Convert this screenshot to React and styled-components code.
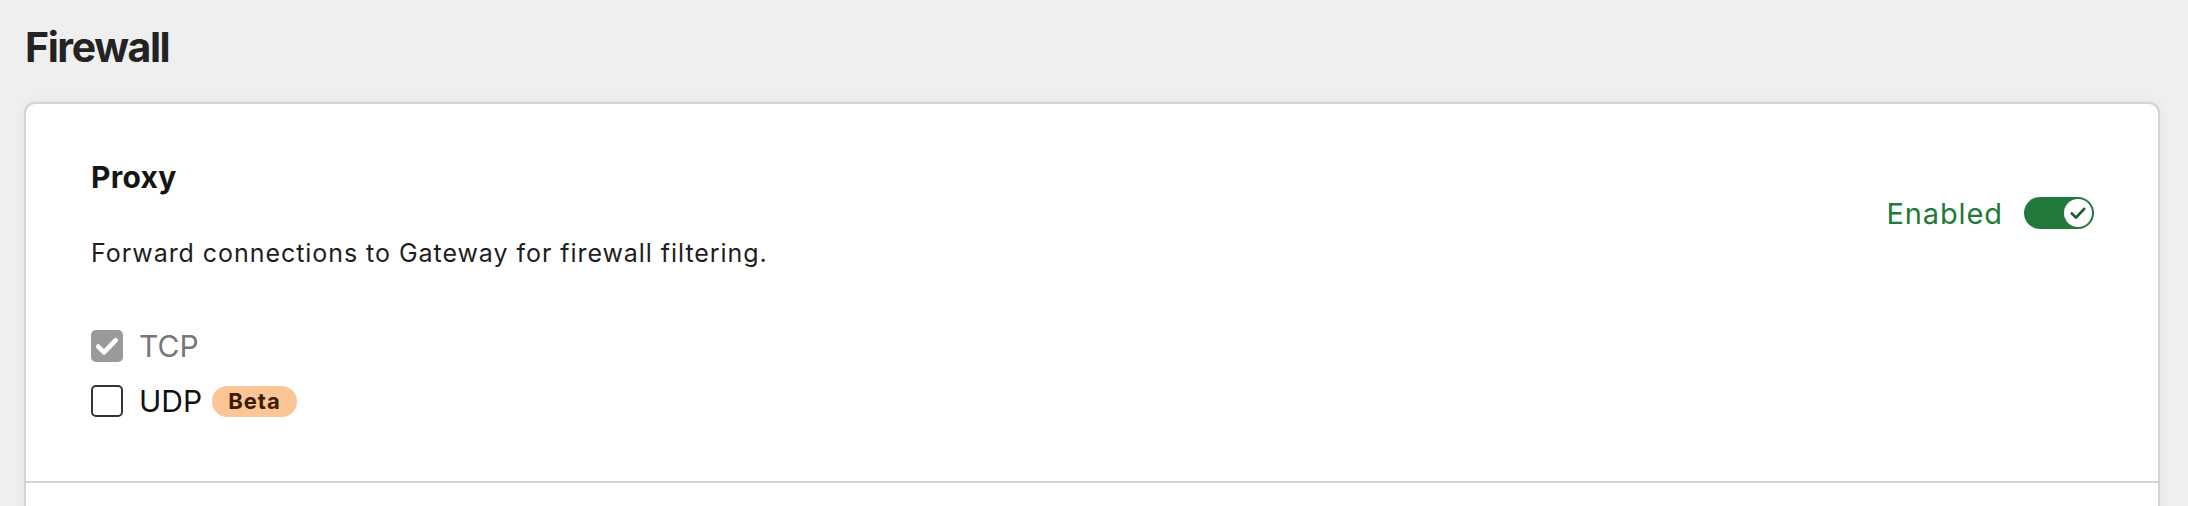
import React, { useState } from 'react';
import styled, { createGlobalStyle } from 'styled-components';

const GlobalStyle = createGlobalStyle`
  html, body {
    margin: 0;
    padding: 0;
    overflow: hidden;
    background: #efefef;
  }
  body {
    font-family: Inter, "Noto Sans", "DejaVu Sans", sans-serif;
    color: #1a1a1a;
  }
`;

const StyledPage = styled.div`
  padding: 21px 28px 0 24px;
  height: 100vh;
  box-sizing: border-box;
`;

const StyledPageTitle = styled.h1`
  margin: 0 0 28px 1px;
  font-size: 41px;
  line-height: 53px;
  font-weight: 700;
  letter-spacing: -1.4px;
  color: #232323;
`;

const StyledCard = styled.div`
  background: #fff;
  border: 2px solid #d3d3d3;
  border-radius: 11px;
  box-shadow: 0 0 10px rgba(0, 0, 0, 0.05);
`;

const StyledSection = styled.section`
  padding: ${({ $last }) => ($last ? '40px 64px' : '55px 64px 62px 65px')};
  border-top: ${({ $first }) => ($first ? 'none' : '2px solid #d3d3d3')};
  min-height: ${({ $last }) => ($last ? '200px' : '0')};
`;

const StyledHeader = styled.div`
  display: flex;
  align-items: center;
  justify-content: space-between;
`;

const StyledHeading = styled.h2`
  margin: 0 0 45px;
  font-size: 30px;
  line-height: 36px;
  font-weight: 700;
  letter-spacing: 0.3px;
  color: #151515;
`;

const StyledDescription = styled.p`
  margin: 0;
  font-size: 25px;
  line-height: 27px;
  letter-spacing: 0.95px;
  color: #1e1e1e;
`;

const StyledStatus = styled.div`
  display: flex;
  align-items: center;
  gap: 21px;
  color: #1f7a38;
  font-size: 29px;
  letter-spacing: 0.9px;
`;

const StyledSwitch = styled.button`
  position: relative;
  width: 70px;
  height: 32px;
  padding: 0;
  border: none;
  border-radius: 16px;
  background: ${({ $on }) => ($on ? '#217a3b' : '#9a9a9a')};
  cursor: pointer;
`;

const StyledKnob = styled.span`
  position: absolute;
  top: 2px;
  left: ${({ $on }) => ($on ? '40px' : '2px')};
  width: 28px;
  height: 28px;
  border-radius: 50%;
  background: #fff;
  display: flex;
  align-items: center;
  justify-content: center;
`;

const StyledOptions = styled.div`
  display: flex;
  flex-direction: column;
  gap: 19px;
  margin-top: 61px;
`;

const StyledOption = styled.label`
  display: flex;
  align-items: center;
  gap: 16px;
  font-size: 30px;
  line-height: 36px;
  color: ${({ $disabled }) => ($disabled ? '#777' : '#111')};
`;

const StyledBox = styled.span`
  width: 32px;
  height: 32px;
  box-sizing: border-box;
  border-radius: 5px;
  display: flex;
  align-items: center;
  justify-content: center;
  background: ${({ $checked, $disabled }) =>
    $checked ? ($disabled ? '#9a9a9a' : '#217a3b') : '#fff'};
  border: ${({ $checked }) => ($checked ? 'none' : '2px solid #333')};
`;

const StyledLabelText = styled.span`
  display: flex;
  align-items: center;
  gap: 10px;
`;

const StyledBadge = styled.span`
  display: inline-flex;
  align-items: center;
  height: 31px;
  padding: 0 16px;
  border-radius: 16px;
  background: #fbc596;
  color: #3a1c07;
  font-size: 22px;
  font-weight: 700;
  letter-spacing: 1px;
`;

const Check = ({ color, size, width }) => (
  <svg width={size} height={size} viewBox="0 0 24 24" fill="none">
    <path
      d="M4.5 12.5l5 5L19.5 7"
      stroke={color}
      strokeWidth={width}
      strokeLinecap="round"
      strokeLinejoin="round"
    />
  </svg>
);

const Option = ({ label, checked, disabled, badge, onToggle }) => (
  <StyledOption $disabled={disabled} onClick={disabled ? undefined : onToggle}>
    <StyledBox $checked={checked} $disabled={disabled}>
      {checked && <Check color="#fff" size={28} width={4} />}
    </StyledBox>
    <StyledLabelText>
      {label}
      {badge && <StyledBadge>{badge}</StyledBadge>}
    </StyledLabelText>
  </StyledOption>
);

const App = () => {
  const [enabled, setEnabled] = useState(true);
  const [udp, setUdp] = useState(false);

  return (
    <>
      <GlobalStyle />
      <StyledPage>
        <StyledPageTitle>Firewall</StyledPageTitle>
        <StyledCard>
          <StyledSection $first>
            <StyledHeader>
              <div>
                <StyledHeading>Proxy</StyledHeading>
                <StyledDescription>
                  Forward connections to Gateway for firewall filtering.
                </StyledDescription>
              </div>
              <StyledStatus>
                {enabled ? 'Enabled' : 'Disabled'}
                <StyledSwitch $on={enabled} onClick={() => setEnabled(!enabled)}>
                  <StyledKnob $on={enabled}>
                    {enabled && <Check color="#1a5a2b" size={20} width={3.2} />}
                  </StyledKnob>
                </StyledSwitch>
              </StyledStatus>
            </StyledHeader>
            <StyledOptions>
              <Option label="TCP" checked disabled />
              <Option label="UDP" badge="Beta" checked={udp} onToggle={() => setUdp(!udp)} />
            </StyledOptions>
          </StyledSection>
          <StyledSection $last />
        </StyledCard>
      </StyledPage>
    </>
  );
};

export default App;
